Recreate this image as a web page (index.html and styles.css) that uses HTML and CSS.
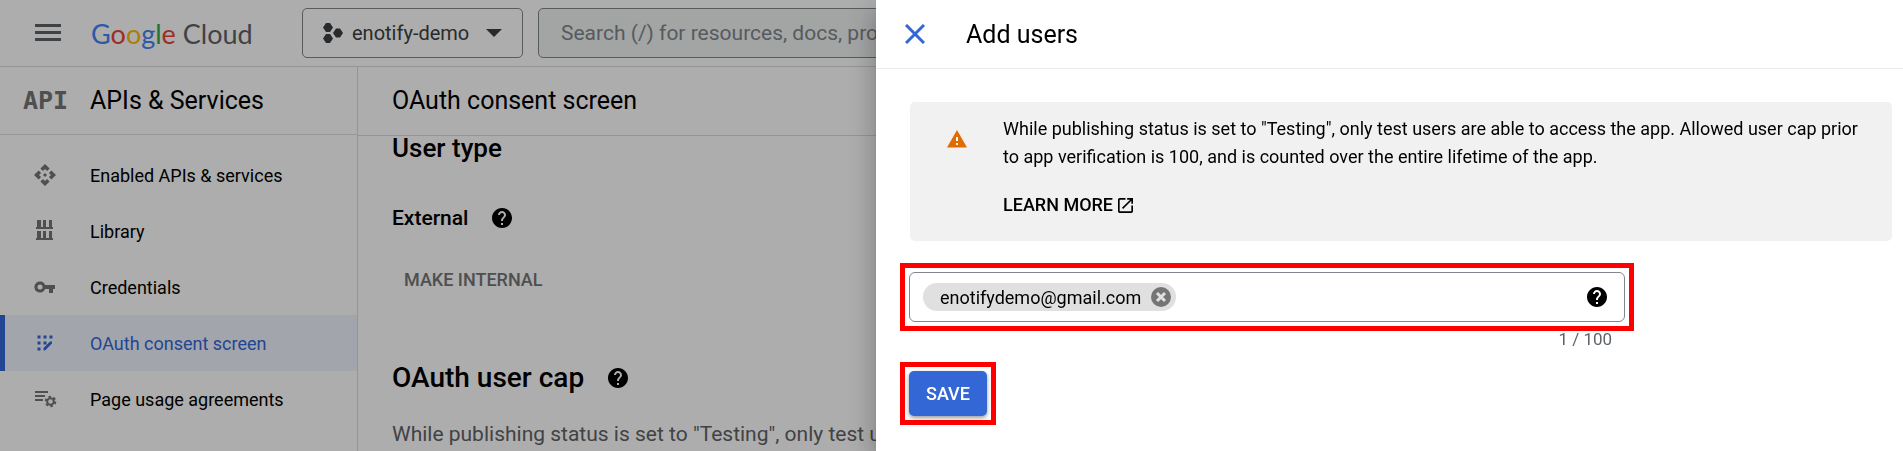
FILE: index.html
```
<!DOCTYPE html>
<html lang="en">
    <head>
        <meta charset="UTF-8" />
        <meta name="viewport" content="width=device-width, initial-scale=1.0" />
        <title>Add users - OAuth consent screen</title>
        <link rel="stylesheet" href="styles.css">
    </head>
    <body>
        <!-- Shared icons -->
        <svg class="sprite" aria-hidden="true">
            <symbol id="help" viewBox="2 2 20 20">
                <path d="M12 2C6.48 2 2 6.48 2 12s4.48 10 10 10 10-4.48 10-10S17.52 2 12 2zm1 17h-2v-2h2v2zm2.07-7.75l-.9.92C13.45 12.9 13 13.5 13 15h-2v-.5c0-1.1.45-2.1 1.17-2.83l1.24-1.26c.37-.36.59-.86.59-1.41 0-1.1-.9-2-2-2s-2 .9-2 2H8c0-2.21 1.79-4 4-4s4 1.79 4 4c0 .88-.36 1.68-.93 2.25z" />
            </symbol>
        </svg>

        <header class="topbar">
            <button class="icon-button menu" aria-label="Main menu">
                <svg width="26" height="18" viewBox="0 0 26 18"><path d="M0 0h26v3H0zM0 7h26v3H0zM0 14h26v3H0z" /></svg>
            </button>
            <a class="logo" href="#"><span class="blue">G</span><span class="red">o</span><span class="yellow">o</span><span class="blue">g</span><span class="green">l</span><span class="red">e</span> Cloud</a>
            <button class="project">
                <svg width="20" height="22" viewBox="0 0 20 22"><path d="M3 1h4l3 4.500-3 4.500H3L0 5.500zM3 12h4l3 4.500-3 4.500H3L0 16.500zM13 6.500h4l3 4.500-3 4.500h-4L10 11z" /></svg>
                <span>enotify-demo</span>
                <svg class="caret" width="16" height="8" viewBox="0 0 16 8"><path d="M0 0h16L8 8z" /></svg>
            </button>
            <input class="search" type="search" aria-label="Search" placeholder="Search (/) for resources, docs, products, and more" />
        </header>

        <div class="layout">
            <nav class="sidebar">
                <div class="sidebar-title">
                    <span class="api" aria-hidden="true">API</span>
                    <span>APIs &amp; Services</span>
                </div>
                <ul>
                    <li>
                        <a href="#">
                            <svg viewBox="0 0 24 24"><path d="M14 12l-2 2-2-2 2-2 2 2zm-2-6l2.12 2.12 2.5-2.5L12 1 7.38 5.62l2.5 2.5L12 6zm-6 6l2.12-2.12-2.5-2.5L1 12l4.62 4.62 2.5-2.5L6 12zm12 0l-2.12 2.12 2.5 2.5L23 12l-4.62-4.62-2.5 2.5L18 12zm-6 6l-2.12-2.12-2.5 2.5L12 23l4.62-4.62-2.5-2.5L12 18z" /></svg>
                            Enabled APIs &amp; services
                        </a>
                    </li>
                    <li>
                        <a href="#">
                            <svg viewBox="0 0 24 24"><path d="M4 1h4v7h2V1h3v7h3V1h3v7h1v2H3V8h1zM4 12h4v7h2v-7h3v7h3v-7h3v7h1v2H3v-2h1z" /></svg>
                            Library
                        </a>
                    </li>
                    <li>
                        <a href="#">
                            <svg viewBox="0 0 24 24"><path d="M12.2 10A5.6 5.6 0 1 0 12.2 14H16v4h4v-4h2v-4zM7 14.5a2.5 2.5 0 1 1 0-5 2.5 2.5 0 0 1 0 5z" /></svg>
                            Credentials
                        </a>
                    </li>
                    <li>
                        <a class="active" href="#" aria-current="page">
                            <svg viewBox="0 0 24 24"><path d="M4.500 4.500h3v3h-3zM10.500 4.500h3v3h-3zM16.500 4.500h3v3h-3zM4.500 10.500h3v3h-3zM10.500 10.500h3v3h-3zM4.500 16.500h3v3h-3zM10.500 17l6.500-6.500h2v2l-7 7h-1.500z" /></svg>
                            OAuth consent screen
                        </a>
                    </li>
                    <li>
                        <a href="#">
                            <svg viewBox="0 0 24 24"><path d="M2 4h13v2H2zM2 8h10v2H2zM2 12h8v2H2z" /><circle class="gear" cx="17.500" cy="14.500" r="3.300" /><circle class="teeth" cx="17.500" cy="14.500" r="4.800" /></svg>
                            Page usage agreements
                        </a>
                    </li>
                </ul>
            </nav>

            <main class="content">
                <h1>OAuth consent screen</h1>
                <section class="details">
                    <h2>User type</h2>
                    <div class="user-type">
                        <h3>External</h3>
                        <button class="icon-button" aria-label="Help"><svg width="20" height="20"><use href="#help" /></svg></button>
                    </div>
                    <button class="text-button" disabled>MAKE INTERNAL</button>
                    <div class="user-cap">
                        <h2>OAuth user cap</h2>
                        <button class="icon-button" aria-label="Help"><svg width="20" height="20"><use href="#help" /></svg></button>
                    </div>
                    <p>While publishing status is set to "Testing", only test users are able to access the app. Allowed user cap prior to app verification is 100, and is counted over the entire lifetime of the app.</p>
                </section>
            </main>
        </div>

        <div class="backdrop"></div>

        <aside class="drawer" role="dialog" aria-labelledby="drawerTitle">
            <header class="drawer-header">
                <button class="icon-button close" aria-label="Close">
                    <svg width="20" height="20" viewBox="0 0 20 20"><path d="M1 1l18 18M19 1L1 19" /></svg>
                </button>
                <h2 id="drawerTitle">Add users</h2>
            </header>

            <div class="drawer-body">
                <div class="callout">
                    <svg class="warning" width="20" height="18" viewBox="0 0 20 18"><path d="M10 0l10 17.5H0z" /><path class="mark" d="M9 7h2v4H9zM9 13h2v2H9z" /></svg>
                    <div>
                        <p>While publishing status is set to "Testing", only test users are able to access the app. Allowed user cap prior to app verification is 100, and is counted over the entire lifetime of the app.</p>
                        <a class="learn-more" href="#">LEARN MORE<svg width="15" height="15" viewBox="3 3 18 18"><path d="M19 19H5V5h7V3H5c-1.11 0-2 .9-2 2v14c0 1.1.89 2 2 2h14c1.1 0 2-.9 2-2v-7h-2v7zM14 3v2h3.59l-9.83 9.83 1.41 1.41L19 6.41V10h2V3h-7z" /></svg></a>
                    </div>
                </div>

                <form>
                    <div class="highlight emails">
                        <div class="field">
                            <span class="chip">
                                enotifydemo@gmail.com
                                <button class="icon-button" type="button" aria-label="Remove enotifydemo@gmail.com">
                                    <svg width="20" height="20" viewBox="0 0 20 20"><circle cx="10" cy="10" r="10" /><path d="M6 6l8 8M14 6l-8 8" /></svg>
                                </button>
                            </span>
                            <input type="text" aria-label="User emails" />
                            <button class="icon-button" type="button" aria-label="Help"><svg width="20" height="20"><use href="#help" /></svg></button>
                        </div>
                    </div>
                    <div class="counter">1 / 100</div>
                    <div class="highlight">
                        <button class="save" type="submit">SAVE</button>
                    </div>
                </form>
            </div>
        </aside>
    </body>
</html>
```

FILE: styles.css
```
* {
    box-sizing: border-box;
}

body {
    margin: 0;
    height: 100vh;
    overflow: hidden;
    font-family: Roboto, Arial, sans-serif;
    font-size: 18px;
    color: #000;
    background-color: #fff;
}

h1,
h2,
h3,
p,
ul {
    margin: 0;
    padding: 0;
}

button,
input {
    font-family: inherit;
    font-size: inherit;
}

a {
    color: inherit;
    text-decoration: none;
}

svg {
    display: block;
    flex: none;
}

.sprite {
    position: absolute;
    width: 0;
    height: 0;
}

.icon-button {
    display: flex;
    padding: 0;
    border: none;
    background: none;
    color: inherit;
    cursor: pointer;
}

/* Top bar */
.topbar {
    display: flex;
    align-items: center;
    height: 67px;
    padding: 0 35px;
    border-bottom: 1px solid #dadce0;
}

.menu {
    width: 26px;
    margin-right: 30px;
    fill: #5f6368;
}

.logo {
    width: 211px;
    font-family: Lato, sans-serif;
    font-size: 27px;
    color: #5f6368;
    white-space: nowrap;
}

.blue {
    color: #4285f4;
}

.red {
    color: #ea4335;
}

.yellow {
    color: #fbbc04;
}

.green {
    color: #34a853;
}

.project {
    display: flex;
    align-items: center;
    gap: 9px;
    width: 221px;
    height: 50px;
    margin-right: 15px;
    padding: 0 20px;
    border: 1px solid #80868b;
    border-radius: 5px;
    background: none;
    font-size: 20px;
    color: #3c4043;
    fill: #3c4043;
}

.caret {
    margin-left: auto;
}

.search {
    flex: 1;
    height: 50px;
    padding: 0 22px;
    border: 1px solid #80868b;
    border-radius: 5px;
    background-color: #f1f3f4;
    font-size: 21px;
}

.search::placeholder {
    color: #80868b;
}

/* Sidebar */
.layout {
    display: flex;
    height: calc(100vh - 67px);
}

.sidebar {
    flex: none;
    width: 358px;
    border-right: 1px solid #dadce0;
}

.sidebar-title {
    display: flex;
    align-items: center;
    height: 68px;
    padding-left: 23px;
    border-bottom: 1px solid #e0e0e0;
    font-size: 25px;
}

.api {
    width: 67px;
    font-family: "DejaVu Sans Mono", monospace;
    font-weight: bold;
    color: #757575;
}

.sidebar ul {
    padding-top: 12px;
    list-style: none;
}

.sidebar a {
    display: flex;
    align-items: center;
    gap: 33px;
    height: 56px;
    padding-left: 33px;
}

.sidebar a svg {
    width: 24px;
    height: 24px;
    fill: #757575;
}

.sidebar a.active {
    padding-left: 28px;
    border-left: 5px solid #3367d6;
    background-color: #f0f4ff;
    color: #3367d6;
}

.sidebar a.active svg {
    fill: #3367d6;
}

.sidebar .gear,
.sidebar .teeth {
    fill: none;
    stroke: #757575;
    stroke-width: 2;
}

.sidebar .teeth {
    stroke-dasharray: 2.5 2.5;
}

/* Page content */
.content {
    flex: 1;
    overflow: hidden;
}

.content h1 {
    height: 69px;
    padding-left: 34px;
    border-bottom: 1px solid #dadce0;
    font-size: 25px;
    font-weight: 400;
    line-height: 68px;
}

.details {
    padding: 0 34px;
}

.details h2 {
    font-size: 26px;
    font-weight: 500;
    line-height: 24px;
}

.details h3 {
    font-size: 21px;
    font-weight: 500;
    line-height: 24px;
}

.user-type,
.user-cap {
    display: flex;
    align-items: center;
    gap: 24px;
}

.user-type {
    margin-top: 46px;
}

.user-cap {
    margin-top: 69px;
}

.details .user-cap h2 {
    font-size: 28px;
}

.text-button {
    height: 36px;
    margin-top: 31px;
    padding: 0 12px;
    border: none;
    background: none;
    font-weight: 500;
    color: #757575;
}

.details p {
    margin-top: 30px;
    font-size: 21px;
    line-height: 28px;
    color: #5f6368;
}

.backdrop {
    position: fixed;
    inset: 0;
    background-color: rgba(0, 0, 0, 0.32);
}

/* Drawer */
.drawer {
    position: fixed;
    top: 0;
    right: 0;
    bottom: 0;
    width: 1027px;
    max-width: 100%;
    background-color: #fff;
    box-shadow: 0 8px 10px -5px rgba(0, 0, 0, 0.2), 0 16px 24px 2px rgba(0, 0, 0, 0.14), 0 6px 30px 5px rgba(0, 0, 0, 0.12);
}

.drawer-header {
    display: flex;
    align-items: center;
    gap: 41px;
    height: 69px;
    padding-left: 29px;
    border-bottom: 1px solid #ebebeb;
}

.drawer-header h2 {
    font-size: 25px;
    font-weight: 400;
}

.close {
    stroke: #3367d6;
    stroke-width: 3;
}

.drawer-body {
    padding: 33px 11px 0 24px;
}

.callout {
    display: flex;
    gap: 36px;
    margin-left: 10px;
    padding: 13px 22px 22px 37px;
    border-radius: 5px;
    background-color: #f1f1f1;
    line-height: 28px;
}

.warning {
    margin-top: 15px;
    fill: #e06c00;
}

.warning .mark {
    fill: #fff;
}

.learn-more {
    display: flex;
    align-items: center;
    gap: 5px;
    margin-top: 20px;
    font-weight: 500;
}

.highlight {
    width: fit-content;
    padding: 4px;
    border: 5px solid #f00;
}

.emails {
    width: 74%;
    margin-top: 22px;
}

.field {
    display: flex;
    align-items: center;
    height: 50px;
    padding: 0 17px 0 13px;
    border: 1px solid #80868b;
    border-radius: 6px;
}

.field input {
    flex: 1;
    min-width: 0;
    border: none;
    outline: none;
    background: none;
}

.chip {
    display: flex;
    align-items: center;
    gap: 10px;
    height: 28px;
    padding: 0 5px 0 17px;
    border-radius: 14px;
    background-color: #e0e0e0;
}

.chip svg {
    fill: #757575;
    stroke: #e0e0e0;
    stroke-width: 3;
}

.chip circle {
    stroke: none;
}

.counter {
    width: 74%;
    margin-bottom: 15px;
    padding-right: 22px;
    font-size: 17px;
    line-height: 16px;
    text-align: right;
    color: #5f6368;
}

.save {
    display: block;
    height: 45px;
    padding: 0 17px;
    border: none;
    border-radius: 5px;
    background-color: #3367d6;
    box-shadow: 0 2px 4px rgba(0, 0, 0, 0.4);
    font-weight: 500;
    color: #fff;
}
```
